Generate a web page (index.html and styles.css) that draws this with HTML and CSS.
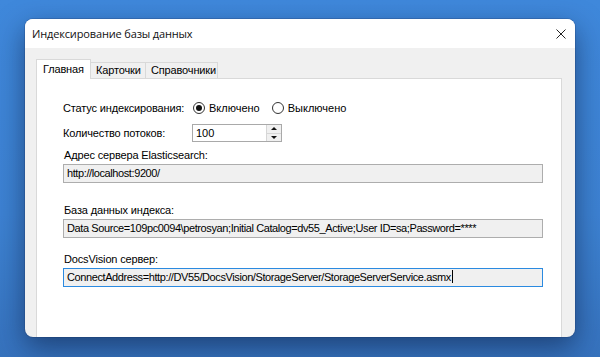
FILE: index.html
```html
<!DOCTYPE html>
<html lang="ru">
<head>
    <meta charset="UTF-8">
    <title>Индексирование базы данных</title>
    <link rel="stylesheet" href="styles.css">
</head>
<body>
    <div class="dialog">
        <div class="title-bar">
            <span class="title">Индексирование базы данных</span>
            <svg class="close" width="10" height="10" viewBox="0 0 10 10">
                <path d="M0.5 0.5 L9.5 9.5 M9.5 0.5 L0.5 9.5" stroke="#222" stroke-width="1"/>
            </svg>
        </div>

        <div class="dialog-body">
            <div class="tabs">
                <div class="tab active">Главная</div>
                <div class="tab">Карточки</div>
                <div class="tab">Справочники</div>
            </div>

            <div class="tab-panel">
                <!-- Status -->
                <div class="row status-row">
                    <span class="label status-label">Статус индексирования:</span>
                    <span class="radio checked"></span>
                    <span class="radio-text">Включено</span>
                    <span class="radio"></span>
                    <span class="radio-text">Выключено</span>
                </div>

                <!-- Threads -->
                <div class="row threads-row">
                    <span class="label threads-label">Количество потоков:</span>
                    <div class="numeric">
                        <span class="numeric-value">100</span>
                        <div class="spinner">
                            <span class="spin up"></span>
                            <span class="spin down"></span>
                        </div>
                    </div>
                </div>

                <div class="field first-field">
                    <div class="label">Адрес сервера Elasticsearch:</div>
                    <div class="textbox">http://localhost:9200/</div>
                </div>

                <div class="field">
                    <div class="label">База данных индекса:</div>
                    <div class="textbox">Data Source=109pc0094\petrosyan;Initial Catalog=dv55_Active;User ID=sa;Password=****</div>
                </div>

                <div class="field last-field">
                    <div class="label">DocsVision сервер:</div>
                    <div class="textbox focused">ConnectAddress=http://DV55/DocsVision/StorageServer/StorageServerService.asmx<span class="caret"></span></div>
                </div>
            </div>
        </div>
    </div>
</body>
</html>
```

FILE: styles.css
```css
/* Desktop backdrop */
body {
    margin: 0;
    width: 600px;
    height: 357px;
    overflow: hidden;
    background: linear-gradient(180deg, #3f88db 0%, #3d82d2 60%, #3672bd 100%);
    font-family: "Liberation Sans", Arial, sans-serif;
    font-size: 11px;
    color: #000;
}

.dialog {
    margin: 19px 0 0 25px;
    width: 550px;
    height: 318px;
    background-color: #f0f0f0;
    border-radius: 8px;
    overflow: hidden;
    box-shadow: 0 10px 28px rgba(10, 25, 60, 0.55), 0 0 0 1px rgba(40, 80, 140, 0.35);
    display: flex;
    flex-direction: column;
}

.title-bar {
    height: 29px;
    flex: none;
    background-color: #fff;
    display: flex;
    align-items: center;
    justify-content: space-between;
    padding: 0 9px 0 7px;
}

.title {
    font-family: "Open Sans", "Noto Sans", sans-serif;
    font-size: 11px;
    color: #111;
    letter-spacing: -0.15px;
}

.close {
    display: block;
}

.dialog-body {
    flex: 1;
    padding: 11px 13px 0 11px;
    display: flex;
    flex-direction: column;
}

/* Tabs */
.tabs {
    display: flex;
    align-items: flex-end;
    height: 19px;
    position: relative;
    z-index: 1;
}

.tab {
    height: 16px;
    line-height: 15px;
    padding: 0 5px;
    border: 1px solid #d9d9d9;
    border-bottom: none;
    background-color: #f0f0f0;
    box-sizing: border-box;
    margin-left: -1px;
    letter-spacing: -0.15px;
}

.tab:first-child {
    margin-left: 0;
}

.tab.active {
    width: 55px;
    height: 20px;
    line-height: 18px;
    padding: 0 6px;
    background-color: #fff;
    margin-bottom: -1px;
}

.tab:nth-child(2) {
    width: 56px;
}

.tab:nth-child(3) {
    width: 73px;
}

.tab-panel {
    flex: 1;
    background-color: #fff;
    border: 1px solid #d9d9d9;
    border-bottom: none;
    padding: 0 0 0 26px;
}

.label {
    letter-spacing: -0.15px;
}

.row {
    display: flex;
    align-items: center;
}

.status-row {
    height: 14px;
    margin-top: 22px;
}

.status-label {
    width: 130px;
}

.radio {
    width: 12px;
    height: 12px;
    border: 1px solid #333;
    border-radius: 50%;
    box-sizing: border-box;
    display: flex;
    align-items: center;
    justify-content: center;
    flex: none;
    background-color: #fff;
}

.radio.checked::after {
    content: "";
    width: 6px;
    height: 6px;
    border-radius: 50%;
    background-color: #111;
}

.radio-text {
    margin-left: 4px;
    margin-right: 12px;
}

.threads-row {
    margin-top: 9px;
    height: 18px;
}

.threads-label {
    width: 129px;
}

.numeric {
    width: 90px;
    height: 18px;
    border: 1px solid #a9a9a9;
    box-sizing: border-box;
    display: flex;
    background-color: #fff;
}

.numeric-value {
    flex: 1;
    padding-left: 3px;
    line-height: 16px;
}

.spinner {
    width: 14px;
    border-left: 1px solid #d6d6d6;
    display: flex;
    flex-direction: column;
}

.spin {
    flex: 1;
    background-color: #f0f0f0;
    display: flex;
    align-items: center;
    justify-content: center;
}

.spin.up {
    border-bottom: 1px solid #d6d6d6;
}

.spin.up::after {
    content: "";
    border: 3px solid transparent;
    border-bottom: 3px solid #111;
    border-top: none;
}

.spin.down::after {
    content: "";
    border: 3px solid transparent;
    border-top: 3px solid #111;
    border-bottom: none;
}

/* Text fields */
.field {
    margin-top: 20px;
}

.first-field {
    margin-top: 6px;
}

.last-field {
    margin-top: 14px;
}

.field .label {
    line-height: 14px;
    margin-bottom: 2px;
    padding-left: 1px;
}

.textbox {
    width: 480px;
    height: 19px;
    box-sizing: border-box;
    border: 1px solid #adadad;
    background-color: #f0f0f0;
    padding-left: 3px;
    line-height: 17px;
    white-space: nowrap;
    overflow: hidden;
    letter-spacing: -0.4px;
}

.textbox.focused {
    border-color: #2b8ae0;
}

.caret {
    display: inline-block;
    width: 1px;
    height: 13px;
    margin-left: 1px;
    background-color: #000;
    vertical-align: -2px;
}
```
